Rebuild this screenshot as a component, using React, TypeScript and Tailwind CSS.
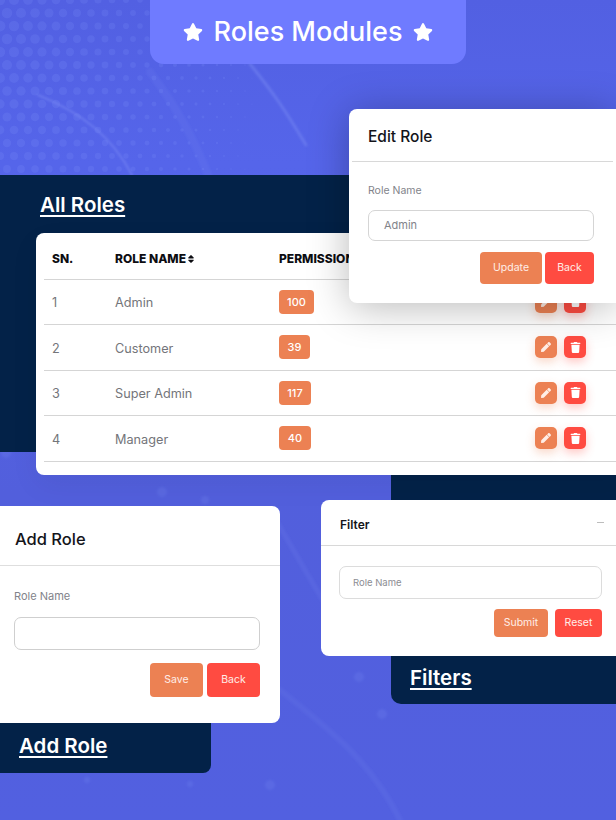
import { FaPen, FaSort, FaStar, FaTrash } from "react-icons/fa";

const roles = [
  { id: 1, name: "Admin", count: 100, badge: "w-[35px]" },
  { id: 2, name: "Customer", count: 39, badge: "w-[31px]" },
  { id: 3, name: "Super Admin", count: 117, badge: "w-[32px]" },
  { id: 4, name: "Manager", count: 40, badge: "w-[32px]" },
];

const dots = Array.from({ length: 34 * 24 }, (_, index) => {
  const col = index % 34;
  const row = Math.floor(index / 34);
  const x = col * 14 + (row % 2 ? 7 : 0);
  const y = row * 13;
  const fade = 1 - Math.hypot(x * 1.05, (y - 30) * 0.6) / 300;
  return { x, y, r: Math.max(0, fade * 5.5) };
}).filter((dot) => dot.r > 0.4);

function Background() {
  return (
    <svg className="absolute inset-0" width="616" height="820" viewBox="0 0 616 820" aria-hidden="true">
      <defs>
        <linearGradient id="page" x1="0" y1="0" x2="0" y2="1">
          <stop offset="0" stopColor="#5260e2" />
          <stop offset="0.2" stopColor="#5565ea" />
          <stop offset="0.6" stopColor="#525fdc" />
          <stop offset="1" stopColor="#5260e0" />
        </linearGradient>
        <filter id="soft">
          <feGaussianBlur stdDeviation="1" />
        </filter>
      </defs>
      <rect width="616" height="820" fill="url(#page)" />
      <g fill="#7f8ff8" fillOpacity="0.2">
        {dots.map((dot) => (
          <circle key={`${dot.x}-${dot.y}`} cx={dot.x} cy={dot.y} r={dot.r} />
        ))}
      </g>
      <g fill="none" stroke="#8090f6" strokeLinecap="round" filter="url(#soft)">
        <path d="M38 95C80 112 112 136 132 175" strokeWidth="2" strokeOpacity="0.45" />
        <path d="M250 64C275 95 285 110 306 145" strokeWidth="3" strokeOpacity="0.4" />
        <path d="M150 72C175 105 195 140 208 175" strokeWidth="8" strokeOpacity="0.1" />
        <path d="M280 690C330 730 370 760 400 820" strokeWidth="6" strokeOpacity="0.1" />
        <path d="M270 510C300 560 320 600 350 640" strokeWidth="5" strokeOpacity="0.12" />
      </g>
      <g fill="#7787f2" fillOpacity="0.22" filter="url(#soft)">
        <circle cx="162" cy="492" r="5" />
        <circle cx="205" cy="500" r="4" />
        <circle cx="87" cy="780" r="3" />
        <circle cx="190" cy="784" r="3" />
        <circle cx="270" cy="785" r="5" />
        <circle cx="359" cy="677" r="5" />
        <circle cx="382" cy="714" r="5" />
        <circle cx="6" cy="453" r="5" />
      </g>
    </svg>
  );
}

function SectionTitle({ children }: { children: string }) {
  return <span className="text-[20.5px] leading-none font-semibold text-white underline underline-offset-[3px] decoration-[1.5px]">{children}</span>;
}

function ActionButton({ tone, children }: { tone: "save" | "back"; children: string }) {
  return (
    <button
      type="button"
      className={`flex h-full w-full items-center justify-center rounded-[4px] text-[10.5px] text-[#ffeee8] ${
        tone === "save" ? "bg-[#ec8153]" : "bg-[#ff4b41]"
      }`}
    >
      {children}
    </button>
  );
}

function RoleRow({ role }: { role: (typeof roles)[number] }) {
  return (
    <div className="flex h-[45.5px] items-center border-b-[1.5px] border-[#d5d5d5] pl-2 pt-[2px] text-[12.7px] text-[#74757a]">
      <span className="w-[63px]">{role.id}</span>
      <span className="w-[164px]">{role.name}</span>
      <span className={`-mt-[2px] flex h-6 items-center justify-center rounded-[4px] bg-[#ec8153] text-[11px] font-medium text-white ${role.badge}`}>
        {role.count}
      </span>
      <div className="-mt-[2px] ml-auto mr-[50px] flex gap-[7px]">
        <span className="flex h-[22px] w-[22px] items-center justify-center rounded-[5px] bg-[#ec8153] text-[10px] text-[#ffeee6] shadow-[0_4px_10px_rgba(236,129,83,0.3)]">
          <FaPen />
        </span>
        <span className="flex h-[22px] w-[22px] items-center justify-center rounded-[5px] bg-[#ff4b41] text-[11px] text-white shadow-[0_4px_10px_rgba(255,75,65,0.3)]">
          <FaTrash />
        </span>
      </div>
    </div>
  );
}

export default function App() {
  return (
    <div className="relative h-[820px] w-[616px] overflow-hidden font-['Inter','Noto_Sans',sans-serif]">
      <Background />

      {/* title tab */}
      <div className="absolute left-[150px] top-0 flex h-16 w-[316px] items-center justify-center gap-[11px] rounded-b-[14px] bg-[#6f7bff] text-white">
        <FaStar className="text-[20px]" />
        <span className="text-[27px] font-medium">Roles Modules</span>
        <FaStar className="text-[20px]" />
      </div>

      {/* navy panels */}
      <div className="absolute left-0 top-[175px] h-[277px] w-full bg-[#032248] pl-10 pt-[19px]">
        <SectionTitle>All Roles</SectionTitle>
      </div>
      <div className="absolute left-[391px] top-[452px] flex h-[252px] w-[225px] items-end rounded-bl-[10px] bg-[#032248] pb-4 pl-[19px]">
        <SectionTitle>Filters</SectionTitle>
      </div>
      <div className="absolute left-0 top-[700px] flex h-[73px] w-[211px] items-end rounded-br-[8px] bg-[#032248] pb-[17px] pl-[19px]">
        <SectionTitle>Add Role</SectionTitle>
      </div>

      {/* roles table */}
      <div className="absolute left-9 top-[233px] h-[242px] w-[600px] rounded-l-[8px] bg-white pl-2 shadow-[0_10px_30px_rgba(0,0,0,0.05)]">
        <div className="flex h-[46.5px] items-center border-b-[1.5px] border-[#d5d5d5] pl-2 pt-[7px] text-[12px] font-extrabold text-[#0d0d12]">
          <span className="w-[63px]">SN.</span>
          <span className="flex w-[164px] items-center">
            ROLE NAME
            <FaSort className="text-[10px]" />
          </span>
          <span>PERMISSIONS</span>
        </div>
        {roles.map((role) => (
          <RoleRow key={role.id} role={role} />
        ))}
      </div>

      {/* edit role */}
      <div className="absolute left-[349px] top-[109px] h-[194px] w-[267px] rounded-l-[8px] bg-white shadow-[0_4px_40px_rgba(0,0,0,0.28)]">
        <div className="mx-[3px] flex h-[53px] items-center border-b-[1.5px] border-[#d8d8d8] pl-4 pt-1 text-[15.5px] font-medium text-[#14141a]">Edit Role</div>
        <div className="pl-[19px] pr-[22px] pt-[21px]">
          <div className="text-[10.5px] leading-4 text-[#82838a]">Role Name</div>
          <div className="mt-[11px] flex h-[31px] items-center rounded-[7px] border-[1.5px] border-[#d5d5d5] pl-[15px] text-[11px] text-[#82838a]">Admin</div>
          <div className="mt-[11px] flex h-8 justify-end gap-[3px]">
            <div className="w-[62px]">
              <ActionButton tone="save">Update</ActionButton>
            </div>
            <div className="w-[49px]">
              <ActionButton tone="back">Back</ActionButton>
            </div>
          </div>
        </div>
      </div>

      {/* add role */}
      <div className="absolute left-0 top-[506px] h-[217px] w-[280px] rounded-r-[8px] bg-white">
        <div className="flex h-[60px] items-center border-b border-[#dedede] pl-[15px] pt-[7px] text-[16.5px] font-medium text-[#14141a]">Add Role</div>
        <div className="pl-[14px] pr-5 pt-[22px]">
          <div className="text-[11px] leading-4 text-[#82838a]">Role Name</div>
          <div className="mt-[13px] h-[33px] rounded-[7px] border-[1.5px] border-[#cfcfcf]" />
          <div className="mt-[13px] flex h-[34px] justify-end gap-1">
            <div className="w-[53px]">
              <ActionButton tone="save">Save</ActionButton>
            </div>
            <div className="w-[53px]">
              <ActionButton tone="back">Back</ActionButton>
            </div>
          </div>
        </div>
      </div>

      {/* filter */}
      <div className="absolute left-[321px] top-[500px] h-[156px] w-[295px] rounded-l-[8px] bg-white">
        <div className="flex h-[46px] items-center justify-between border-b border-[#d8d8d8] pl-[19px] pr-3 pt-[5px] text-[12px] font-semibold text-[#14141a]">
          Filter
          <span className="-mt-[5px] h-px w-[7px] bg-[#bdbdbd]" />
        </div>
        <div className="pl-[18px] pr-[14px] pt-[20px]">
          <div className="flex h-[33px] items-center rounded-[7px] border-[1.5px] border-[#dcdcdc] pl-[13px] pt-[2px] text-[9.5px] text-[#8c8d93]">Role Name</div>
          <div className="mt-[10px] flex h-[28px] justify-end gap-[7px]">
            <div className="w-[54px]">
              <ActionButton tone="save">Submit</ActionButton>
            </div>
            <div className="w-[47px]">
              <ActionButton tone="back">Reset</ActionButton>
            </div>
          </div>
        </div>
      </div>
    </div>
  );
}
